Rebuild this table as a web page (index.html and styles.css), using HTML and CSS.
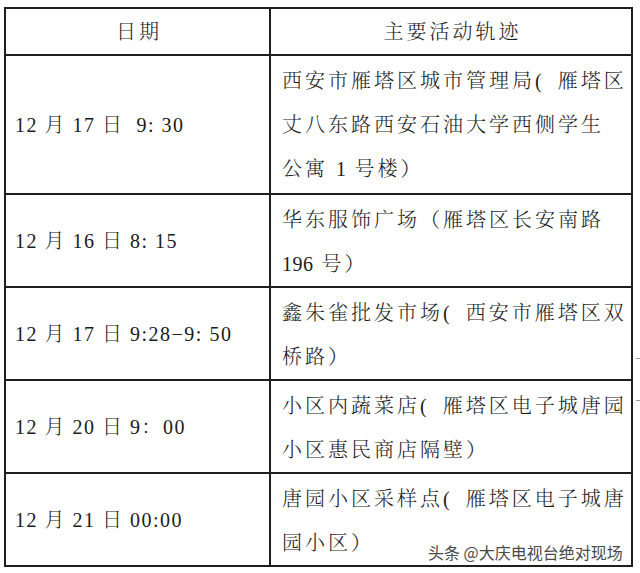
FILE: index.html
```html
<!DOCTYPE html>
<html lang="zh-CN">
<head>
<meta charset="utf-8">
<title>主要活动轨迹</title>
<link rel="stylesheet" href="styles.css">
</head>
<body>
<div class="page">
  <div class="grid">
    <div class="cell head">日期</div>
    <div class="cell head">主要活动轨迹</div>

    <div class="cell date">12 月 17 日 &nbsp;9: 30</div>
    <div class="cell place tall">西安市雁塔区城市管理局<span class="lp">(</span>雁塔区<br>丈八东路西安石油大学西侧学生<br>公寓 <span class="num">1</span> 号楼）</div>

    <div class="cell date">12 月 16 日 8: 15</div>
    <div class="cell place">华东服饰广场（雁塔区长安南路<br><span class="num">196</span> 号）</div>

    <div class="cell date">12 月 17 日 9:28−9: 50</div>
    <div class="cell place">鑫朱雀批发市场<span class="lp">(</span>西安市雁塔区双<br>桥路）</div>

    <div class="cell date">12 月 20 日 9：00</div>
    <div class="cell place">小区内蔬菜店<span class="lp">(</span>雁塔区电子城唐园<br>小区惠民商店隔壁）</div>

    <div class="cell date">12 月 21 日 00:00</div>
    <div class="cell place">唐园小区采样点<span class="lp">(</span>雁塔区电子城唐<br>园小区）</div>
  </div>
  <div class="watermark">头条 @大庆电视台绝对现场</div>
  <div class="dash dash-a"></div>
  <div class="dash dash-b"></div>
</div>
</body>
</html>
```
FILE: styles.css
```css
html, body {
  margin: 0;
  padding: 0;
  background: #ffffff;
}

.page {
  position: relative;
  width: 640px;
  height: 573px;
  padding: 7px 0 0 4px;
  box-sizing: border-box;
  font-family: "Liberation Serif", "Noto Serif CJK SC", "Noto Sans CJK SC", serif;
  font-weight: 300;
  color: #1b1b1b;
}

.grid {
  display: grid;
  grid-template-columns: 265px 362px;
  width: 629px;
  box-sizing: border-box;
  border-top: 2px solid #1e1e1e;
  border-left: 2px solid #1e1e1e;
}

.cell {
  border-right: 2px solid #1e1e1e;
  border-bottom: 2px solid #1e1e1e;
  font-size: 20px;
  line-height: 44px;
}

.head {
  padding: 1px 0 0 0;
  text-align: center;
  letter-spacing: 3px;
  text-indent: 3px;
}

.date {
  display: flex;
  align-items: center;
  padding-left: 9px;
  letter-spacing: 1.5px;
  white-space: pre;
}

.place {
  padding: 3px 4px 0 11px;
  letter-spacing: 3px;
  white-space: nowrap;
}

.place.tall {
  padding-bottom: 2px;
}

.num {
  letter-spacing: 0.5px;
}

.lp {
  letter-spacing: 16px;
}

.watermark {
  position: absolute;
  left: 428px;
  top: 541px;
  font-family: "Noto Sans CJK SC", "Noto Sans", sans-serif;
  font-weight: 400;
  font-size: 16px;
  line-height: 22px;
  color: #4a4a4a;
  white-space: nowrap;
  text-shadow: 0 0 2px #ffffff, 0 0 2px #ffffff;
}

.dash {
  position: absolute;
  left: 636px;
  width: 4px;
  height: 1px;
  background: #9a9a9a;
}

.dash-a {
  top: 358px;
}

.dash-b {
  top: 400px;
}
```
